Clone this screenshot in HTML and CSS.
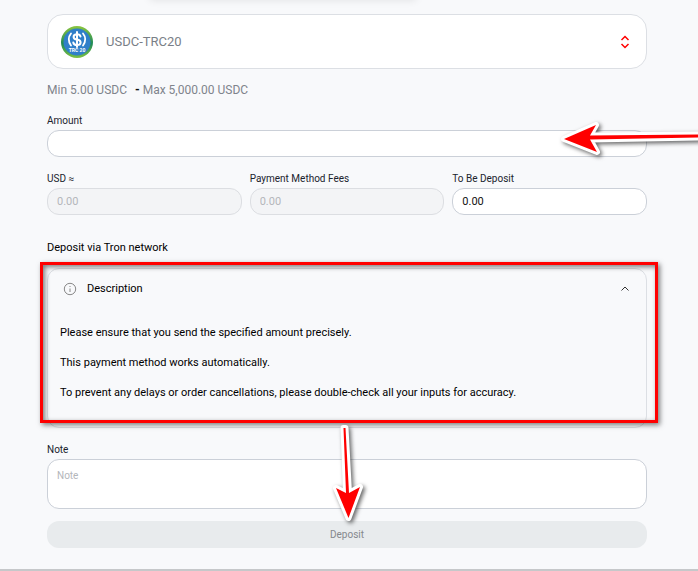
FILE: index.html
```
<!DOCTYPE html>
<html lang="en">
<head>
	<meta charset="UTF-8">
	<meta name="viewport" content="width=device-width, initial-scale=1">
	<title>Deposit</title>
	<link rel="stylesheet" href="styles.css">
</head>
<body>
	<div class="top-shadow"></div>
	<form class="deposit">
		<div class="currency">
			<svg class="coin" viewBox="0 0 32 32" aria-hidden="true">
				<defs>
					<linearGradient id="ring" x1="0" y1="0" x2="0" y2="1">
						<stop offset="0" stop-color="#8cc63f"/>
						<stop offset="0.55" stop-color="#1f8a58"/>
						<stop offset="1" stop-color="#7cc143"/>
					</linearGradient>
				</defs>
				<circle cx="16" cy="16" r="16" fill="url(#ring)"/>
				<circle cx="16" cy="16" r="13.5" fill="#2f7fc9"/>
				<g fill="none" stroke="#fff" stroke-linecap="round">
					<path d="M10 7.500Q5.500 13 10 19.500M22 7.500Q26.500 13 22 19.500" stroke-width="1.800"/>
					<path d="M19.500 10.500Q19 8.300 16 8.300Q12.600 8.300 12.600 10.900Q12.600 13 16 13.500Q19.600 14.100 19.600 16.500Q19.600 19 16 19Q12.700 19 12.300 16.500M16 6V21" stroke-width="2"/>
				</g>
				<text class="coin-text" x="16" y="26" text-anchor="middle">TRC 20</text>
			</svg>
			<select class="currency-select" aria-label="Payment method">
				<option>USDC-TRC20</option>
			</select>
			<svg class="sort" viewBox="0 0 10 14" aria-hidden="true">
				<path d="M1.500 5L5 1.500L8.500 5M1.500 9L5 12.500L8.500 9"/>
			</svg>
		</div>
		<p class="limits"><span>Min 5.00 USDC</span><span><b>-</b> Max 5,000.00 USDC</span></p>

		<div class="field amount">
			<label for="amount">Amount</label>
			<input id="amount" type="text">
			<svg class="arrow arrow-left" viewBox="0 0 142 44" aria-hidden="true">
				<path d="M8 22L40 8L34 18.500L142 17.500V20.500L34 22.500L41 35Z"/>
			</svg>
		</div>

		<div class="row">
			<div class="field">
				<label for="usd">USD ≈</label>
				<input id="usd" type="text" placeholder="0.00" disabled>
			</div>
			<div class="field">
				<label for="fees">Payment Method Fees</label>
				<input id="fees" type="text" placeholder="0.00" disabled>
			</div>
			<div class="field">
				<label for="total">To Be Deposit</label>
				<input id="total" type="text" value="0.00">
			</div>
		</div>

		<p class="network">Deposit via Tron network</p>
		<div class="info">
			<details class="info-card" open>
				<summary>
					<svg class="info-icon" viewBox="0 0 14 14" aria-hidden="true">
						<circle cx="7" cy="7" r="5.700"/>
						<path d="M7 6.500V10M7 4V5"/>
					</svg>
					<span>Description</span>
					<svg class="chevron" viewBox="0 0 10 8" aria-hidden="true">
						<path d="M1.500 5.500L5 2L8.500 5.500"/>
					</svg>
				</summary>
				<div class="info-text">
					<p>Please ensure that you send the specified amount precisely.</p>
					<p>This payment method works automatically.</p>
					<p>To prevent any delays or order cancellations, please double-check all your inputs for accuracy.</p>
				</div>
			</details>
			<div class="frame"></div>
			<svg class="arrow arrow-down" viewBox="0 0 50 110" aria-hidden="true">
				<path d="M18.500 8H20.500L24 73L35 67L23.500 98L11 68L21 73Z"/>
			</svg>
		</div>

		<div class="field note">
			<label for="note">Note</label>
			<textarea id="note" placeholder="Note"></textarea>
		</div>
		<button class="submit" type="submit" disabled>Deposit</button>
	</form>
</body>
</html>
```

FILE: styles.css
```
*{
	box-sizing: border-box;
}
body{
	margin: 0;
	background: #f8f9fb;
	color: #000;
	font-family: Roboto, "Open Sans", sans-serif;
	font-size: 11px;
	line-height: 16px;
	overflow-x: hidden;
}
p{
	margin: 0;
}
.top-shadow{
	position: absolute;
	top: -20px;
	left: 150px;
	width: 266px;
	height: 18px;
	box-shadow: 0 2px 8px rgba(0,0,0,0.1);
}
.deposit{
	display: flex;
	flex-direction: column;
	padding: 14px 51px 21px 47px;
	border-bottom: 2px solid #c6c8ca;
}
.currency{
	display: flex;
	align-items: center;
	gap: 13px;
	height: 55px;
	padding: 0 16px 0 13px;
	background: #fff;
	border: 1px solid #dcdfe4;
	border-radius: 16px;
}
.coin{
	width: 32px;
	height: 32px;
}
.coin-text{
	fill: #fff;
	font-size: 5px;
	font-weight: 700;
}
.currency-select{
	flex: 1;
	padding: 0;
	border: 0;
	background: none;
	appearance: none;
	color: #7a7f87;
	font: inherit;
	font-size: 13px;
}
.sort{
	width: 10px;
	height: 14px;
	fill: none;
	stroke: #f00;
	stroke-width: 1.5;
}
.limits{
	display: flex;
	gap: 8px;
	margin-top: 13px;
	color: #7f848c;
	font-size: 12px;
}
.limits b{
	color: #111;
}
.field{
	position: relative;
	display: flex;
	flex-direction: column;
	gap: 1px;
	min-width: 0;
}
.field label{
	color: #20232d;
	font-size: 10px;
}
.field input,
.field textarea{
	width: 100%;
	height: 27px;
	padding: 0 9px;
	background: #fff;
	border: 1px solid #cbd0d8;
	border-radius: 12px;
	color: #111;
	font: inherit;
}
.field input:disabled{
	background: #f3f4f6;
	border-color: #dcdee2;
}
.field ::placeholder{
	color: #b3b6bb;
}
.amount{
	margin-top: 15px;
}
.row{
	display: grid;
	grid-template-columns: repeat(3, 1fr);
	gap: 8px;
	margin-top: 14px;
}
.network{
	margin-top: 25px;
}
.info{
	position: relative;
	margin-top: 12px;
}
.info-card{
	padding: 12px 12px 26px;
	border: 1px solid #dcdfe4;
	border-radius: 12px;
}
.info-card summary{
	display: flex;
	align-items: center;
	gap: 10px;
	padding: 0 4px 0 3px;
	list-style: none;
	cursor: pointer;
}
.info-icon{
	width: 14px;
	height: 14px;
	fill: none;
	stroke: #888;
}
.chevron{
	width: 10px;
	height: 8px;
	margin-left: auto;
	fill: none;
	stroke: #333;
}
.info-text{
	display: flex;
	flex-direction: column;
	gap: 14px;
	margin-top: 28px;
}
.frame{
	position: absolute;
	top: -6px;
	right: -11px;
	bottom: 5px;
	left: -7px;
	border: 3px solid #f00;
	box-shadow: 2px 2px 5px rgba(0,0,0,0.5), inset 2px 2px 5px rgba(0,0,0,0.5);
	pointer-events: none;
}
.arrow{
	position: absolute;
	z-index: 1;
	overflow: visible;
	fill: #f00;
	stroke: #fff;
	stroke-width: 6;
	stroke-linejoin: round;
	paint-order: stroke;
	filter: drop-shadow(2px 2px 2px rgba(0,0,0,0.6));
	pointer-events: none;
}
.arrow-left{
	top: 4px;
	right: -51px;
	width: 142px;
	height: 44px;
}
.arrow-down{
	top: 152px;
	left: calc(50% - 22px);
	width: 50px;
	height: 110px;
}
.note{
	margin-top: 14px;
}
.field textarea{
	height: 50px;
	padding: 8px 9px;
	font-size: 10px;
	resize: none;
}
.submit{
	height: 27px;
	margin-top: 12px;
	border: 0;
	border-radius: 12px;
	background: #e8ebed;
	color: #85888c;
	font: inherit;
	font-size: 10px;
}
```
